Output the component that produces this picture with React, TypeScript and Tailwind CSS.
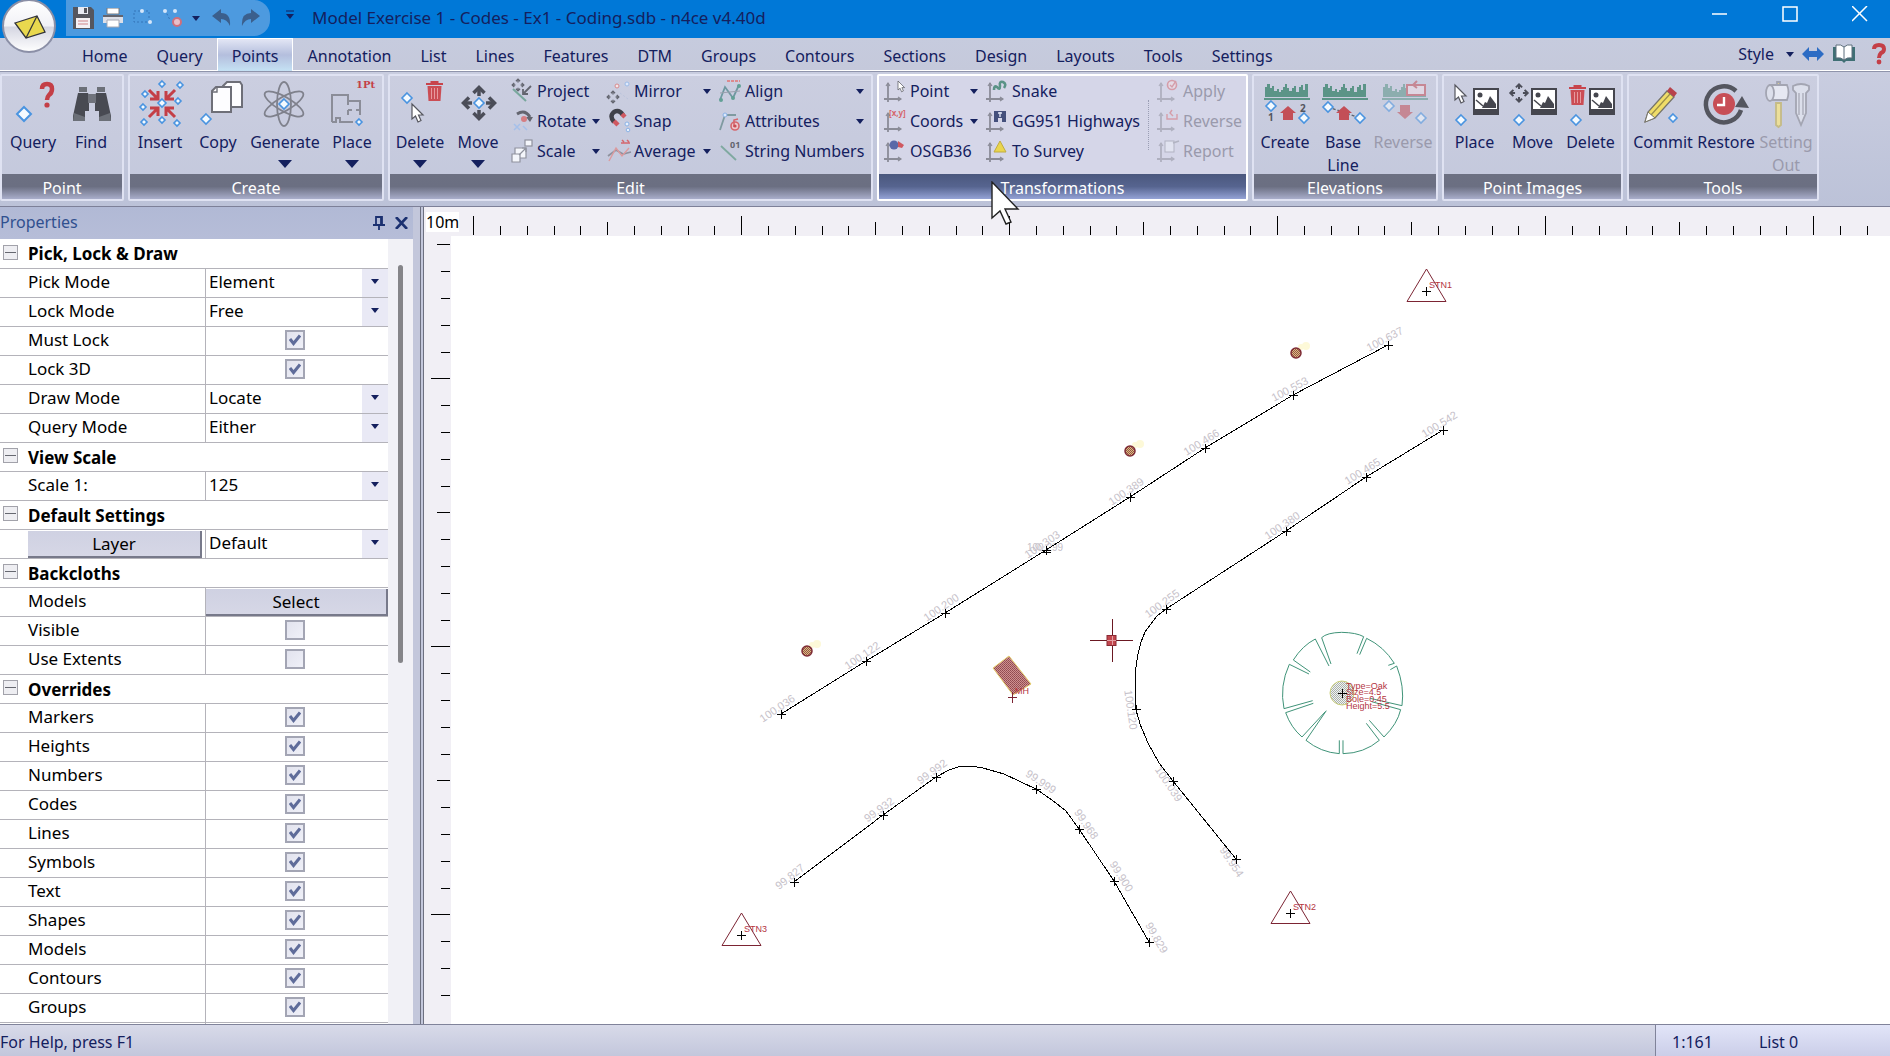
import React from "react";

const tabs = [
  "Home", "Query", "Points", "Annotation", "List", "Lines", "Features", "DTM",
  "Groups", "Contours", "Sections", "Design", "Layouts", "Tools", "Settings",
];

/* ---------- shared glyphs ---------- */

function Dia({ x, y, r = 4 }: { x: number; y: number; r?: number }) {
  return (
    <path
      d={`M${x} ${y - r}L${x + r} ${y}L${x} ${y + r}L${x - r} ${y}Z`}
      fill="#f4faff"
      stroke="#4a94e0"
      strokeWidth={r > 5 ? 2 : 1.6}
    />
  );
}

function Pointer({ x, y, s = 1 }: { x: number; y: number; s?: number }) {
  return (
    <path
      transform={`translate(${x} ${y}) scale(${s})`}
      d="M0 0V15L3.5 12L6 18L9 16.5L6.5 11H11Z"
      fill="#fff"
      stroke="#55565e"
      strokeWidth="1.2"
    />
  );
}

function Trash({ x, y }: { x: number; y: number }) {
  return (
    <g transform={`translate(${x} ${y})`}>
      <path d="M0 3H17M5.500 3V1H11.500V3" fill="none" stroke="#c8444c" strokeWidth="2" />
      <path d="M1.500 5H15.500L14.500 20H2.500Z" fill="#cb4d54" />
      <path d="M5.500 7V18M8.500 7V18M11.500 7V18" stroke="#e79a9e" strokeWidth="1" />
    </g>
  );
}

function FourWay({ x, y, r, c = "#4b4d58" }: { x: number; y: number; r: number; c?: string }) {
  return (
    <g transform={`translate(${x} ${y}) scale(${r / 16})`} fill="none" stroke={c} strokeWidth="3.500">
      <path d="M0 -15V-7M0 15V7M-15 0H-7M15 0H7" />
      <path d="M-5.500 -10L0 -15.500L5.500 -10M-5.500 10L0 15.500L5.500 10M-10 -5.500L-15.500 0L-10 5.500M10 -5.500L15.500 0L10 5.500" />
    </g>
  );
}

function Photo({ x, y }: { x: number; y: number }) {
  return (
    <g transform={`translate(${x} ${y})`}>
      <rect width="26" height="27" fill="#45464e" />
      <rect x="2" y="2" width="22" height="19" fill="#fff" />
      <circle cx="7" cy="7" r="2.500" fill="#45464e" />
      <path d="M9 20L12 14L14 15L17 8L23 16V20Z" fill="#45464e" />
      <path d="M3 12L10 18" stroke="#45464e" strokeWidth="1.500" />
    </g>
  );
}

function Bars({ x, y }: { x: number; y: number }) {
  return (
    <g transform={`translate(${x} ${y})`}>
      <path
        d="M0 14V4H2V1H5V5H7V3H9V8H12V6H14V9H16V7H18V4H20V1H22V5H24V8H27V5H29V3H31V9H34V4H36V2H38V7H40V1H43V14Z"
        fill="#5b9487"
      />
      <path d="M-1 16H45" stroke="#5b9487" strokeWidth="2" />
    </g>
  );
}

function House({ x, y, down }: { x: number; y: number; down?: boolean }) {
  return (
    <path
      transform={`translate(${x} ${y}) scale(1 ${down ? -1 : 1})`}
      d="M0 -7L8 0H5V7H-5V0H-8Z"
      fill="#c34f57"
    />
  );
}

function Axes() {
  return (
    <g fill="none" stroke="#8b8c98" strokeWidth="1.800">
      <path d="M4 4V23M0 20H17" />
      <path d="M2 7L4 4L6 7M14 18L17 20L14 22" strokeWidth="1.200" />
    </g>
  );
}

function Caret({ big }: { big?: boolean }) {
  return big ? (
    <svg width="14" height="8" viewBox="0 0 14 8"><path d="M0 0H14L7 8Z" fill="#14205e" /></svg>
  ) : (
    <svg width="8" height="5" viewBox="0 0 8 5" className="shrink-0"><path d="M0 0H8L4 5Z" fill="#14205e" /></svg>
  );
}

/* ---------- large ribbon icons, 48 x 48 ---------- */

const bigIcons: Record<string, React.ReactNode> = {
  query: (
    <>
      <Dia x={15} y={35} r={7} />
      <path d="M33 10Q33 5 38 5Q43 5 43 10Q43 14 40 16Q38 18 38 21" fill="none" stroke="#c43f47" strokeWidth="4.500" />
      <circle cx="38" cy="26" r="2.600" fill="#c43f47" />
    </>
  ),
  find: (
    <g fill="#484a52">
      <path d="M12 8H20V13H12ZM30 8H38V13H30Z" fill="#6c7078" />
      <path d="M11 14H21L22 17V32H18L18 42H6V37ZM29 14H39L44 37V42H32L32 32H28V17Z" />
      <rect x="21" y="15" width="8" height="9" fill="#70737c" />
      <path d="M7 34L6 42H18V38ZM43 34L44 42H32V38Z" fill="#6c7078" />
    </g>
  ),
  insert: (
    <>
      {[[26, 5], [44, 6], [9, 15], [42, 22], [7, 28], [8, 43], [26, 41], [41, 44]].map(([x, y]) => (
        <Dia key={`${x}-${y}`} x={x} y={y} r={3} />
      ))}
      <g fill="none" stroke="#c43f47" strokeWidth="3">
        <path d="M13 11L22 20M22 12V20H14M39 11L30 20M30 12V20H38M13 38L22 29M22 37V29H14M39 38L30 29M30 37V29H38" />
      </g>
      <Dia x={26} y={24} r={4} />
    </>
  ),
  copy: (
    <g fill="#fdfdff" stroke="#6e6f78" strokeWidth="2">
      <path d="M33 3H46L48 6V28H29V7Z" />
      <path d="M22 8H37V33H18V12Z" />
      <path d="M18 13H23V8" fill="none" strokeWidth="1.400" />
      <Dia x={12} y={40} r={5} />
    </g>
  ),
  generate: (
    <g fill="none" stroke="#7f818c" strokeWidth="1.800">
      <ellipse cx="23" cy="25" rx="7" ry="22" />
      <ellipse cx="23" cy="25" rx="7" ry="22" transform="rotate(60 23 25)" />
      <ellipse cx="23" cy="25" rx="7" ry="22" transform="rotate(-60 23 25)" />
      <Dia x={23} y={25} r={5} />
    </g>
  ),
  place: (
    <>
      <text x="28" y="9" fontSize="10" fontWeight="bold" fontFamily="DejaVu Serif, serif" fill="#c43f47">1Pt</text>
      <path d="M4 43V16H20V22H32V36M20 22V26M20 31H24M28 31H32M20 31V36M4 43H8V39H12V43H25" fill="none" stroke="#8b8d98" strokeWidth="2" />
      <Dia x={31} y={43} r={3} />
    </>
  ),
  delete: (
    <>
      <Dia x={11} y={19} r={5} />
      <Pointer x={16} y={25} />
      <Trash x={30} y={2} />
    </>
  ),
  move: (
    <>
      <FourWay x={25} y={24} r={16} />
      <Dia x={25} y={24} r={5} />
    </>
  ),
  elevCreate: (
    <>
      <Bars x={4} y={4} />
      <Dia x={10} y={27} r={5} />
      <Dia x={43} y={39} r={5} />
      <House x={27} y={34} />
      <text x="7" y="42" fontSize="10" fontWeight="bold" fill="#55565e">1</text>
      <text x="39" y="33" fontSize="10" fontWeight="bold" fill="#55565e">2</text>
    </>
  ),
  elevBase: (
    <>
      <Bars x={4} y={4} />
      <path d="M9 28L41 39" stroke="#5b6470" strokeWidth="1.500" strokeDasharray="3 2" />
      <Dia x={9} y={28} r={5} />
      <Dia x={41} y={39} r={5} />
      <House x={25} y={34} />
    </>
  ),
  elevReverse: (
    <g opacity="0.55">
      <Bars x={4} y={4} />
      <rect x="28" y="6" width="18" height="10" fill="#f1dfe6" stroke="#c34f57" strokeWidth="2" />
      <path d="M38 2L34 6L38 9" fill="none" stroke="#c34f57" strokeWidth="2" />
      <Dia x={10} y={27} r={5} />
      <Dia x={42} y={39} r={5} />
      <House x={26} y={33} down />
    </g>
  ),
  imgPlace: (
    <>
      <Pointer x={4} y={6} />
      <Photo x={22} y={9} />
      <Dia x={10} y={41} r={5} />
    </>
  ),
  imgMove: (
    <>
      <FourWay x={10} y={14} r={9} />
      <Photo x={22} y={9} />
      <Dia x={10} y={41} r={5} />
    </>
  ),
  imgDelete: (
    <>
      <Trash x={2} y={6} />
      <Photo x={22} y={9} />
      <Dia x={9} y={41} r={5} />
    </>
  ),
  commit: (
    <>
      <path d="M6 43L9 33L28 12L35 18L16 39Z" fill="#f0dd68" stroke="#77756a" strokeWidth="1.300" />
      <path d="M12 36L31 15" stroke="#9a8f4a" strokeWidth="1.200" />
      <path d="M6 43L9 33L16 39Z" fill="#fff" stroke="#77756a" />
      <path d="M28 12L31 8L38 14L35 18Z" fill="#b8434b" />
      <Dia x={34} y={39} r={4} />
    </>
  ),
  restore: (
    <>
      <path d="M34 12A18 18 0 1 0 39 31" fill="none" stroke="#54565f" strokeWidth="4.500" />
      <path d="M33 28L40 17L47 29Z" fill="#54565f" />
      <circle cx="22" cy="25" r="11" fill="#c74e56" />
      <path d="M22 18V26H15" fill="none" stroke="#fff" strokeWidth="2.400" />
    </>
  ),
  setting: (
    <g strokeWidth="1.800" stroke="#a3a5b2">
      <path d="M14 24H19V46L16.500 48L14 46Z" fill="#ecdf9a" stroke="#c5bb86" />
      <path d="M15 3H18V7H15Z" fill="#d8cd92" />
      <path d="M8 6H25Q28 13 25 21H8Z" fill="#e6e8f2" />
      <ellipse cx="8" cy="14" rx="4" ry="8" fill="#dcdfeb" />
      <path d="M31 7Q39 3 47 7V11L44 14V34L39 46L34 34V14L31 11Z" fill="#dcdfeb" />
      <path d="M37 14V36M41 14V36" strokeWidth="1.200" />
    </g>
  ),
};

/* ---------- small ribbon icons, 24 x 24 ---------- */

const smallIcons: Record<string, React.ReactNode> = {
  project: (
    <>
      <FourWay x={7} y={6} r={6} c="#63656f" />
      <path d="M2 10L15 22" stroke="#78a79c" strokeWidth="2" />
      <path d="M20 7L12 15M12 10V15H17" fill="none" stroke="#63656f" strokeWidth="1.800" />
    </>
  ),
  rotate: (
    <>
      <path d="M6 5Q14 0 19 8" fill="none" stroke="#63656f" strokeWidth="3" />
      <path d="M15 8H22L19 13Z" fill="#63656f" />
      <circle cx="13" cy="10" r="3" fill="#d57d82" />
      <path d="M3 15L9 21M3 21L9 15M12 17L16 21" stroke="#a5c0ea" strokeWidth="1.500" />
    </>
  ),
  scale: (
    <g fill="#f4f6fb" stroke="#8f929e" strokeWidth="1.200">
      <rect x="14" y="1" width="7" height="6" />
      <path d="M4 9H15V19H4Z" />
      <path d="M1 15H9V23H1Z" />
      <path d="M8 16L15 9M11 9H15V13" fill="none" />
    </g>
  ),
  mirror: (
    <>
      <FourWay x={5} y={18} r={6} c="#63656f" />
      <circle cx="9" cy="7" r="2" fill="#f3e7ea" stroke="#d78a8e" />
      <circle cx="19" cy="5" r="2" fill="#dfe9fb" stroke="#9bbbe8" />
      <path d="M12 14L20 20" stroke="#bac4dc" strokeDasharray="2 2" />
    </>
  ),
  snap: (
    <>
      <path d="M6 13Q1 7 6 3Q11 0 15 6" fill="none" stroke="#3f4149" strokeWidth="4.500" />
      <path d="M6 12L10 16M14 5L17 8" stroke="#cf5860" strokeWidth="4.500" />
      <circle cx="19" cy="15" r="2" fill="#e9f1fc" stroke="#8ab2e6" />
      <circle cx="20" cy="21" r="1.800" fill="#e9f1fc" stroke="#8ab2e6" />
    </>
  ),
  average: (
    <>
      <path d="M0 17L8 11L15 15L23 13" fill="none" stroke="#8f929e" strokeWidth="1.800" />
      <path d="M1 22L8 9L14 17L21 9" fill="none" stroke="#dc9a9e" strokeWidth="1.400" />
      <path d="M13 4H22M14 1L16 3M19 1L21 3" stroke="#d5666c" strokeWidth="1.500" />
    </>
  ),
  align: (
    <>
      <path d="M1 21L6 8L14 19L20 6" fill="none" stroke="#6e98a0" strokeWidth="1.800" />
      <path d="M1 14L21 12" stroke="#9ba0ae" />
      <path d="M8 2H21" stroke="#dc8a8e" strokeWidth="2" strokeDasharray="3 1" />
      <g fill="#63a096"><circle cx="2" cy="21" r="2" /><circle cx="14" cy="19" r="2" /><circle cx="20" cy="7" r="2" /></g>
    </>
  ),
  attributes: (
    <>
      <path d="M1 21L6 6H17" fill="none" stroke="#7f9aa0" strokeWidth="1.800" />
      <circle cx="6" cy="6" r="2" fill="#dce8fb" stroke="#8ab2e6" />
      <circle cx="16" cy="17" r="4" fill="#ecc7cc" stroke="#d5666c" strokeWidth="1.600" />
      <path d="M15 18V11L19 10" fill="none" stroke="#d5666c" strokeWidth="1.600" />
      <circle cx="16" cy="17" r="1.600" fill="#c94e56" />
    </>
  ),
  string: (
    <>
      <path d="M2 7L17 21" stroke="#7fa9a0" strokeWidth="1.800" />
      <text x="11" y="9" fontSize="9" fontWeight="bold" fill="#63656f">01</text>
    </>
  ),
  point: (
    <>
      <Axes />
      <Pointer x={14} y={2} s={0.6} />
    </>
  ),
  coords: (
    <>
      <Axes />
      <text x="5" y="7" fontSize="8" fontWeight="bold" fill="#d5666c">[x,y]</text>
    </>
  ),
  osgb: (
    <>
      <Axes />
      <circle cx="10" cy="6" r="4.500" fill="#5a69a8" />
      <path d="M14 2L20 6L18 9L14 8Z" fill="#cf5860" />
    </>
  ),
  snake: (
    <>
      <Axes />
      <path d="M8 11Q8 6 11 8Q14 12 14 7Q13 2 17 3Q21 5 18 9" fill="none" stroke="#5b9487" strokeWidth="2.600" />
    </>
  ),
  highways: (
    <>
      <Axes />
      <path d="M8 2H20V13H16V9H12V13H8Z" fill="#44507c" />
      <path d="M12 4H16M14 3V8" stroke="#dfe4f4" strokeWidth="1.400" />
    </>
  ),
  survey: (
    <>
      <Axes />
      <path d="M14 2L20 13H8Z" fill="#ead54e" stroke="#c0ac3f" />
    </>
  ),
  apply: (
    <g opacity="0.5">
      <Axes />
      <circle cx="15" cy="6" r="4.500" fill="#f3dfe4" stroke="#d5666c" strokeWidth="1.600" />
      <path d="M13 6L15 8L19 2" fill="none" stroke="#d5666c" strokeWidth="1.400" />
    </g>
  ),
  reverse: (
    <g opacity="0.5">
      <Axes />
      <path d="M10 5V10H20V5M15 1L13 4L16 7" fill="none" stroke="#d5666c" strokeWidth="1.400" />
    </g>
  ),
  report: (
    <g opacity="0.5">
      <Axes />
      <rect x="8" y="2" width="9" height="11" fill="#eef0f8" stroke="#8f929e" />
      <path d="M16 4L22 2" stroke="#8f929e" strokeWidth="1.500" />
    </g>
  ),
};

/* ---------- ribbon ---------- */

function BigButton({ icon, label, width, menu, disabled }: {
  icon: string; label: string; width: string; menu?: boolean; disabled?: boolean;
}) {
  return (
    <button
      disabled={disabled}
      className={`${width} ${disabled ? "text-[#9a9aac]" : "text-[#14205e]"} flex flex-col items-center pt-[3px] h-[99px]`}
    >
      <svg width="48" height="48" viewBox="0 0 48 48" className="shrink-0 mb-1 overflow-visible">
        {bigIcons[icon]}
      </svg>
      <span className={`${label.includes(" ") ? "" : "whitespace-nowrap"} leading-[23px]`}>{label}</span>
      {menu && <span className="mt-[6px]"><Caret big /></span>}
    </button>
  );
}

type SmallItem = { icon: string; label: string; menu?: boolean; disabled?: boolean };

function SmallColumn({ items, width }: { items: SmallItem[]; width: string }) {
  return (
    <div className={`${width} flex flex-col`}>
      {items.map((it) => (
        <button
          key={it.label}
          disabled={it.disabled}
          className={`${it.disabled ? "text-[#9a9aac]" : "text-[#14205e]"} h-[30px] flex items-center`}
        >
          <svg width="24" height="24" viewBox="0 0 24 24" className="shrink-0 mr-[2px] overflow-visible">
            {smallIcons[it.icon]}
          </svg>
          <span className="flex-1 text-left whitespace-nowrap">{it.label}</span>
          {it.menu && <Caret />}
        </button>
      ))}
    </div>
  );
}

function Panel({ title, width, active, children }: {
  title: string; width: string; active?: boolean; children: React.ReactNode;
}) {
  return (
    <section
      className={`${width} ${active ? "bg-[#d5d6e8] border-white" : "bg-linear-to-b from-[#cbcee0] to-[#c3c8dc] border-[#dfe2f2]"} shrink-0 h-[127px] border-2 rounded-xs flex flex-col`}
    >
      <div className="flex h-[98px] justify-center">{children}</div>
      <h2
        className={`${active ? "from-[#4b587e] via-[#56648f] to-[#95a3d6]" : "from-[#6c7082] via-[#6b6f82] to-[#a9aecb]"} bg-linear-to-b h-[25px] leading-[28px] text-center text-white`}
      >
        {title}
      </h2>
    </section>
  );
}

function Ribbon() {
  return (
    <div className="h-[135px] shrink-0 flex gap-1 pt-[2px] bg-linear-to-b from-[#c9cde0] to-[#bcc2d8] border-t border-[#8f94ab] overflow-hidden">
      <Panel title="Point" width="w-[124px]">
        <BigButton icon="query" label="Query" width="w-[58px]" />
        <BigButton icon="find" label="Find" width="w-[58px]" />
      </Panel>
      <Panel title="Create" width="w-[256px]">
        <BigButton icon="insert" label="Insert" width="w-[58px]" />
        <BigButton icon="copy" label="Copy" width="w-[58px]" />
        <BigButton icon="generate" label="Generate" width="w-[76px]" menu />
        <BigButton icon="place" label="Place" width="w-[58px]" menu />
      </Panel>
      <Panel title="Edit" width="w-[485px]">
        <BigButton icon="delete" label="Delete" width="w-[58px]" menu />
        <BigButton icon="move" label="Move" width="w-[58px]" menu />
        <div className="flex gap-2 pl-1 pr-[6px]">
          <SmallColumn
            width="w-[89px]"
            items={[
              { icon: "project", label: "Project" },
              { icon: "rotate", label: "Rotate", menu: true },
              { icon: "scale", label: "Scale", menu: true },
            ]}
          />
          <SmallColumn
            width="w-[103px]"
            items={[
              { icon: "mirror", label: "Mirror", menu: true },
              { icon: "snap", label: "Snap" },
              { icon: "average", label: "Average", menu: true },
            ]}
          />
          <SmallColumn
            width="w-[145px]"
            items={[
              { icon: "align", label: "Align", menu: true },
              { icon: "attributes", label: "Attributes", menu: true },
              { icon: "string", label: "String Numbers" },
            ]}
          />
        </div>
      </Panel>
      <Panel title="Transformations" width="w-[371px]" active>
        <div className="flex gap-2">
          <SmallColumn
            width="w-[94px]"
            items={[
              { icon: "point", label: "Point", menu: true },
              { icon: "coords", label: "Coords", menu: true },
              { icon: "osgb", label: "OSGB36" },
            ]}
          />
          <SmallColumn
            width="w-[154px]"
            items={[
              { icon: "snake", label: "Snake" },
              { icon: "highways", label: "GG951 Highways" },
              { icon: "survey", label: "To Survey" },
            ]}
          />
          <div className="my-6 border-l border-dotted border-[#9a9eb4]" />
          <SmallColumn
            width="w-[84px]"
            items={[
              { icon: "apply", label: "Apply", disabled: true },
              { icon: "reverse", label: "Reverse", disabled: true },
              { icon: "report", label: "Report", disabled: true },
            ]}
          />
        </div>
      </Panel>
      <Panel title="Elevations" width="w-[186px]">
        <BigButton icon="elevCreate" label="Create" width="w-[58px]" />
        <BigButton icon="elevBase" label="Base Line" width="w-[58px]" />
        <BigButton icon="elevReverse" label="Reverse" width="w-[62px]" disabled />
      </Panel>
      <Panel title="Point Images" width="w-[181px]">
        <BigButton icon="imgPlace" label="Place" width="w-[58px]" />
        <BigButton icon="imgMove" label="Move" width="w-[58px]" />
        <BigButton icon="imgDelete" label="Delete" width="w-[58px]" />
      </Panel>
      <Panel title="Tools" width="w-[192px]">
        <BigButton icon="commit" label="Commit" width="w-[64px]" />
        <BigButton icon="restore" label="Restore" width="w-[62px]" />
        <BigButton icon="setting" label="Setting Out" width="w-[58px]" disabled />
      </Panel>
    </div>
  );
}

/* ---------- title bar and tabs ---------- */

function TitleBar() {
  return (
    <header className="h-[38px] shrink-0 flex items-center bg-[#0078d7]">
      <div className="ml-[66px] w-[204px] h-9 -mt-[2px] rounded-r-2xl bg-[#4d9adf] flex items-center gap-2 pl-[6px]">
        <button aria-label="Save">
          <svg width="22" height="22" viewBox="0 0 22 22">
            <path d="M1 0H19L22 3V22H1Z" fill="#55565e" />
            <rect x="6" y="0" width="10" height="7" fill="#e8eaf2" /><rect x="12" y="1" width="3" height="5" fill="#55565e" />
            <rect x="4" y="11" width="14" height="10" fill="#f4f1f4" />
            <path d="M6 14H16M6 17H16" stroke="#cf8589" />
          </svg>
        </button>
        <button aria-label="Print">
          <svg width="22" height="20" viewBox="0 0 22 20">
            <path d="M5 0H17V6H5Z" fill="#fff" stroke="#77787f" />
            <path d="M1 7H21V15H1Z" fill="#dcdfe8" />
            <path d="M1 7H21V9H1Z" fill="#63656f" />
            <path d="M5 12H17V19H5Z" fill="#fff" stroke="#a5a8b4" />
          </svg>
        </button>
        <button aria-label="Select">
          <svg width="22" height="20" viewBox="0 0 22 20">
            <rect x="2" y="3" width="15" height="11" fill="none" stroke="#3474b8" strokeDasharray="2 2" />
            <circle cx="10" cy="3" r="2" fill="#d5e6fa" /><circle cx="18" cy="14" r="2" fill="#d5e6fa" />
          </svg>
        </button>
        <button aria-label="Deselect">
          <svg width="22" height="20" viewBox="0 0 22 20">
            <path d="M3 2L8 12" stroke="#3474b8" strokeDasharray="2 2" />
            <circle cx="3" cy="3" r="2" fill="#d5e6fa" /><circle cx="13" cy="3" r="2" fill="#d5e6fa" />
            <circle cx="15" cy="14" r="4" fill="#e8bfc9" stroke="#cf6f7c" strokeWidth="2" />
          </svg>
        </button>
        <Caret />
        <button aria-label="Undo" className="ml-1">
          <svg width="20" height="18" viewBox="0 0 20 18">
            <path d="M0 7L9 0V4Q19 4 18 17Q15 10 9 10V14Z" fill="#3b5f8c" />
          </svg>
        </button>
        <button aria-label="Redo">
          <svg width="20" height="18" viewBox="0 0 20 18">
            <path d="M20 7L11 0V4Q1 4 2 17Q5 10 11 10V14Z" fill="#3b5f8c" />
          </svg>
        </button>
      </div>
      <button aria-label="Customize toolbar" className="ml-4 mb-2">
        <svg width="8" height="10" viewBox="0 0 8 10"><path d="M0 1H8" stroke="#14205e" /><path d="M0 4H8L4 9Z" fill="#14205e" /></svg>
      </button>
      <h1 className="ml-[18px] mb-[3px] flex-1 text-[#14205e] text-[17px]">
        Model Exercise 1 - Codes - Ex1 - Coding.sdb - n4ce v4.40d
      </h1>
      <div className="flex gap-[54px] pr-[22px] mb-[10px]">
        {["M0 8H15", "M1 1H15V15H1Z", "M0 0L15 15M15 0L0 15"].map((d, i) => (
          <button key={d} aria-label={["Minimize", "Maximize", "Close"][i]}>
            <svg width="16" height="16" viewBox="0 0 16 16"><path d={d} fill="none" stroke="#fff" strokeWidth="1.500" /></svg>
          </button>
        ))}
      </div>
    </header>
  );
}

function TabBar() {
  return (
    <nav className="h-[33px] shrink-0 flex bg-linear-to-b from-[#c6cbde] to-[#c5c9db] pl-[67px] border-b border-white">
      {tabs.map((t) => (
        <button
          key={t}
          className={`pl-[14px] pr-[13px] border text-[#14205e] leading-[34px] ${
            t === "Points"
              ? "border-white border-b-0 bg-linear-to-b from-[#e3e6f5] via-[#b4bedd] to-[#c5e2f4] -mb-px"
              : "border-transparent"
          }`}
        >
          {t}
        </button>
      ))}
      <div className="ml-auto flex items-center gap-3 pr-1">
        <button className="flex items-center gap-3 text-[#14205e] leading-[28px]">
          Style <Caret />
        </button>
        <button aria-label="Toggle width" className="-mx-1">
          <svg width="22" height="14" viewBox="0 0 22 14"><path d="M0 7L7 0V4H15V0L22 7L15 14V10H7V14Z" fill="#2c6cc4" /></svg>
        </button>
        <button aria-label="Manual">
          <svg width="24" height="20" viewBox="0 0 24 20">
            <path d="M1 3H23V17H14L12 19L10 17H1Z" fill="#3f6f74" />
            <path d="M4 1Q9 0 12 3Q15 0 20 1V14Q15 13 12 16Q9 13 4 14Z" fill="#fff" stroke="#5d6f7c" />
            <path d="M12 3V16" stroke="#5d6f7c" />
          </svg>
        </button>
        <button aria-label="Help" className="ml-1">
          <svg width="14" height="22" viewBox="0 0 14 22">
            <path d="M2 6Q2 2 7 2Q12 2 12 6Q12 9 9 10Q7 12 7 15" fill="none" stroke="#c43f47" strokeWidth="4" />
            <circle cx="7" cy="19" r="2.400" fill="#c43f47" />
          </svg>
        </button>
      </div>
    </nav>
  );
}

/* ---------- properties ---------- */

type Prop = { name: string; kind: "select" | "check" | "button" | "layer"; value?: string; on?: boolean };

const groups: { title: string; rows: Prop[] }[] = [
  {
    title: "Pick, Lock & Draw",
    rows: [
      { name: "Pick Mode", kind: "select", value: "Element" },
      { name: "Lock Mode", kind: "select", value: "Free" },
      { name: "Must Lock", kind: "check", on: true },
      { name: "Lock 3D", kind: "check", on: true },
      { name: "Draw Mode", kind: "select", value: "Locate" },
      { name: "Query Mode", kind: "select", value: "Either" },
    ],
  },
  { title: "View Scale", rows: [{ name: "Scale 1:", kind: "select", value: "125" }] },
  { title: "Default Settings", rows: [{ name: "Layer", kind: "layer", value: "Default" }] },
  {
    title: "Backcloths",
    rows: [
      { name: "Models", kind: "button", value: "Select" },
      { name: "Visible", kind: "check" },
      { name: "Use Extents", kind: "check" },
    ],
  },
  {
    title: "Overrides",
    rows: [
      "Markers", "Heights", "Numbers", "Codes", "Lines", "Symbols",
      "Text", "Shapes", "Models", "Contours", "Groups",
    ].map((name) => ({ name, kind: "check" as const, on: true })),
  },
];

const raised =
  "bg-linear-to-b from-[#cfd1e2] to-[#d6d7e6] border-r-2 border-b-2 border-[#77798a] text-center block w-full h-[27px] leading-[26px]";

function PropRow({ row, id }: { row: Prop; id: string }) {
  return (
    <tr className="h-[29px]">
      <th scope="row" className="border-t border-r border-[#b4b3ba] pl-7 font-normal text-left">
        {row.kind === "layer" ? (
          <div className="pr-[3px]"><button className={raised}>{row.name}</button></div>
        ) : (
          <label htmlFor={id} className="block leading-[26px] pb-[2px]">{row.name}</label>
        )}
      </th>
      <td className="border-t border-[#b4b3ba]">
        {(row.kind === "select" || row.kind === "layer") && (
          <div className="grid items-center">
            <select
              id={id}
              aria-label={row.name}
              defaultValue={row.value}
              className="col-start-1 row-start-1 appearance-none bg-transparent w-full h-[28px] pl-[3px] pb-[2px] leading-[26px]"
            >
              <option>{row.value}</option>
            </select>
            <span className="col-start-1 row-start-1 justify-self-end w-[26px] h-[28px] bg-[#e9e9f5] flex items-center justify-center pb-1 pointer-events-none">
              <Caret />
            </span>
          </div>
        )}
        {row.kind === "check" && (
          <div className="grid place-items-center pr-1 pb-[2px]">
            <input
              id={id}
              type="checkbox"
              defaultChecked={row.on}
              className="peer col-start-1 row-start-1 appearance-none size-5 border-2 border-[#a3a5b4] bg-linear-to-br from-[#e2e3ee] to-[#eff0f8]"
            />
            <svg width="12" height="12" viewBox="0 0 12 12" className="col-start-1 row-start-1 invisible peer-checked:visible pointer-events-none">
              <path d="M1 5L4.500 9.500L11 1.500" fill="none" stroke="#5f6c9a" strokeWidth="3" />
            </svg>
          </div>
        )}
        {row.kind === "button" && <button id={id} className={raised}>{row.value}</button>}
      </td>
    </tr>
  );
}

function Properties() {
  return (
    <aside className="w-[413px] shrink-0 flex flex-col bg-white text-[17px] text-black">
      <div className="h-8 shrink-0 flex items-center bg-linear-to-b from-[#b1b9d5] to-[#b6bdd8] pr-[5px]">
        <h2 className="flex-1 text-[#30508f] text-base leading-[30px] pb-[2px]">Properties</h2>
        <button aria-label="Auto hide" className="mr-[10px]">
          <svg width="12" height="14" viewBox="0 0 12 14"><path d="M3 1H9V9H3ZM0 9H12M6 9V14M8 1V9" fill="none" stroke="#1b3070" strokeWidth="1.800" /></svg>
        </button>
        <button aria-label="Close panel">
          <svg width="13" height="12" viewBox="0 0 13 12"><path d="M1 0L12 12M12 0L1 12" stroke="#1b3070" strokeWidth="2.600" /></svg>
        </button>
      </div>
      <div className="flex-1 min-h-0 flex overflow-hidden">
        <div className="flex-1 overflow-hidden">
          <table className="w-full table-fixed border-separate border-spacing-0">
            <colgroup>
              <col className="w-[206px]" />
              <col />
            </colgroup>
            {groups.map((g, gi) => (
              <tbody key={g.title}>
                <tr className="h-[29px]">
                  <th colSpan={2} scope="rowgroup" className={`${gi ? "border-t border-[#b4b3ba]" : ""} text-left font-bold pl-[3px]`}>
                    <span className="flex items-center gap-[10px] leading-[27px]">
                      <button aria-label={`Collapse ${g.title}`} className="mb-[3px]">
                        <svg width="15" height="15" viewBox="0 0 15 15" className="block">
                          <rect x="0.500" y="0.500" width="14" height="14" fill="#eeeef2" stroke="#a2a2aa" />
                          <path d="M2 7.500H13" stroke="#666870" />
                        </svg>
                      </button>
                      {g.title}
                    </span>
                  </th>
                </tr>
                {g.rows.map((r) => (
                  <PropRow key={r.name} row={r} id={`${gi}-${r.name}`} />
                ))}
              </tbody>
            ))}
            <tbody>
              <tr className="h-1">
                <td className="border-t border-r border-[#b4b3ba]" />
                <td className="border-t border-[#b4b3ba]" />
              </tr>
            </tbody>
          </table>
        </div>
        {/* scrollbar */}
        <div className="w-[25px] bg-[#f1f1f6] pt-[26px] flex justify-center">
          <div className="w-[5px] h-[398px] rounded-full bg-[#858589]" />
        </div>
      </div>
    </aside>
  );
}

/* ---------- survey drawing ---------- */

type Mark = [number, number, string, number, boolean?];

// x, y, height, label angle, label under the line
const marks: Mark[] = [
  [781, 714, "100.036", -34], [866, 661, "100.122", -34], [945, 613, "100.200", -34],
  [1046, 550, "100.303", -34], [1130, 497, "100.389", -34], [1205, 448, "100.466", -32],
  [1293, 395, "100.553", -28], [1388, 345, "100.637", -28],
  [1443, 430, "100.542", -32], [1366, 477, "100.465", -32], [1286, 531, "100.380", -34],
  [1166, 609, "100.255", -36], [1136, 709, "100.120", 82, true], [1173, 781, "100.039", 56, true],
  [1236, 859, "99.954", 56, true],
  [794, 882, "99.827", -38], [883, 815, "99.932", -36], [936, 777, "99.992", -36],
  [1036, 789, "99.999", 34], [1079, 829, "99.968", 56], [1114, 881, "99.900", 58],
  [1149, 942, "99.829", 60],
];

const stations: [number, number, string][] = [
  [1426, 291, "STN1"], [1290, 913, "STN2"], [741, 935, "STN3"],
];

const posts: [number, number][] = [[1296, 353], [1130, 451], [807, 651]];

const hTicks = Array.from({ length: 80 }, (_, i) => i);
const vTicks = Array.from({ length: 29 }, (_, i) => i);

function Drawing() {
  return (
    <svg className="absolute inset-0 w-full h-full" fontFamily="Liberation Sans, Arial, sans-serif">
      <defs>
        <pattern id="hatch" width="2" height="2" patternUnits="userSpaceOnUse">
          <rect width="2" height="2" fill="#d08f8f" />
          <rect width="1" height="1" fill="#8f4a50" />
          <rect x="1" y="1" width="1" height="1" fill="#98565a" />
        </pattern>
        <pattern id="stipple" width="2" height="2" patternUnits="userSpaceOnUse">
          <rect width="2" height="2" fill="#dcc07c" />
          <rect width="1" height="1" fill="#94504a" />
          <rect x="1" y="1" width="1" height="1" fill="#94504a" />
        </pattern>
        <pattern id="bark" width="2" height="2" patternUnits="userSpaceOnUse">
          <rect width="2" height="2" fill="#f2f2f2" />
          <rect width="1" height="1" fill="#a9b2ac" />
          <rect x="1" y="1" width="1" height="1" fill="#a9b2ac" />
        </pattern>
      </defs>
      <g transform="translate(-424 -207)">
        {/* rulers */}
        <g stroke="#000" strokeWidth="1" shapeRendering="crispEdges">
          {hTicks.map((i) => {
            const x = Math.round(473.2 + i * 26.8) + 0.5;
            return <path key={i} d={`M${x} ${i % 10 === 0 ? 216 : i % 5 === 0 ? 222 : 226}V235`} />;
          })}
          {vTicks.map((i) => {
            const y = Math.round(244.4 + i * 26.8) + 0.5;
            return <path key={i} d={`M${i % 10 === 5 ? 431 : i % 5 === 0 ? 437 : 441} ${y}H450`} />;
          })}
        </g>

        {/* posts */}
        {posts.map(([x, y]) => (
          <g key={x}>
            <circle cx={x + 10} cy={y - 7} r="4" fill="#fdf9d8" />
            <circle cx={x + 5} cy={y - 6} r="3" fill="#fdf9d8" />
            <circle cx={x} cy={y} r="5" fill="url(#stipple)" stroke="#7d2a34" strokeWidth="1.500" />
          </g>
        ))}

        {/* heights */}
        <g fontSize="11" fill="#c6c1c9" textAnchor="middle">
          {marks.map(([x, y, t, a, under]) => (
            <text key={`${x}-${y}`} transform={`translate(${x} ${y}) rotate(${a})`} y={under ? 9 : a > 0 ? -5 : -3}>{t}</text>
          ))}
          <text transform="translate(1045 551)" fontSize="10">100.299</text>
        </g>

        {/* kerb lines */}
        <g fill="none" stroke="#000" shapeRendering="crispEdges">
          <path d="M781 714L866 661L945 613L1046 550L1130 497L1205 448L1293 395L1388 345" />
          <path d="M1443 430L1366 477L1286 531L1166 609L1157 616L1150 625L1145 632L1141 642L1138 654L1136 667L1135 683L1136 709L1140 724L1148 743L1159 763L1173 781L1236 859" />
          <path d="M794 882L883 815L936 777L949 770L961 766L971 766L983 768L1004 774L1036 789L1052 800L1066 811L1079 829L1114 881L1149 942" />
          {marks.map(([x, y]) => (
            <path key={`${x}-${y}`} d={`M${x - 4} ${y + 0.5}H${x + 5}M${x + 0.5} ${y - 4}V${y + 5}`} />
          ))}
          <path d="M1042 552.500H1051" />
        </g>

        {/* stations */}
        {stations.map(([x, y, t]) => (
          <g key={t}>
            <path d={`M${x + 0.5} ${y - 22}L${x + 20} ${y + 10.5}H${x - 19}Z`} fill="none" stroke="#7c2433" />
            <path d={`M${x - 4} ${y + 0.5}H${x + 5}M${x + 0.5} ${y - 4}V${y + 5}`} stroke="#000" />
            <text x={x + 3} y={y - 3} fontSize="9" fill="#b4343f">{t}</text>
          </g>
        ))}

        {/* picked point */}
        <path d="M1090 640.500H1133M1112.500 619V662" stroke="#6b1822" />
        <rect x="1107" y="635.500" width="9" height="10" fill="#c2474e" stroke="#8a2a34" />
        <path d="M1107 640.500H1116M1112.500 636V645" stroke="#e6a2a6" />

        {/* manhole */}
        <path d="M1009 656L1031 684L1013 695L993 668Z" fill="url(#hatch)" stroke="#e6cf6e" />
        <text x="1015" y="694" fontSize="9" fill="#b4343f">MH</text>
        <path d="M1008 697.500H1017M1012.500 692V703" stroke="#7c2433" />

        {/* tree */}
        <g transform="translate(1260 610) scale(0.3333)" fill="none" stroke="#3f9377" strokeWidth="3">
          <path d="M213 162L185 83Q200 68 245 67Q290 68 311 80L291 131" />
          <path d="M299 134L320 85Q372 110 403 160L385 166" />
          <path d="M391 179L410 168Q434 230 426 287L330 265" />
          <path d="M335 275L422 299Q412 342 372 381L328 331" />
          <path d="M319 340L358 391Q312 430 249 431V391" />
          <path d="M238 391V431Q182 427 138 391L199 302" />
          <path d="M196 305L126 381Q93 353 77 308L160 280" />
          <path d="M158 272L72 296Q58 228 88 163L147 192" />
          <path d="M151 186L100 150Q127 107 166 87L207 168" />
        </g>
        <circle cx="1342" cy="693" r="12" fill="url(#bark)" stroke="#cbd07c" />
        <g fontSize="9" fill="#b4343f">
          <text x="1346" y="689">Type=Oak</text>
          <text x="1346" y="695">Size=4.5</text>
          <text x="1346" y="702">Bole=0.45</text>
          <text x="1346" y="709">Height=5.5</text>
        </g>
        <path d="M1338 693.500H1347M1342.500 689V698" stroke="#000" />
      </g>
    </svg>
  );
}

function Viewport() {
  return (
    <main className="relative flex-1 min-w-0 bg-[#f1eff5] pl-[27px] pt-[29px]">
      <div className="h-full bg-white" />
      <Drawing />
      <span className="absolute left-[2px] top-[5px] w-[33px] h-5 leading-5 text-center bg-white text-black text-base">10m</span>
    </main>
  );
}

function StatusBar() {
  return (
    <footer className="h-8 shrink-0 flex border-t border-[#80839a] bg-linear-to-b from-[#d8dae9] to-[#c3c7dc] text-[#14205e] text-base leading-[34px]">
      <p className="flex-1">For Help, press F1</p>
      <div className="w-[235px] border-l border-[#80839a] bg-linear-to-b from-[#e2e5f8] to-[#cbcee9] pl-4 flex gap-[46px]">
        <span>1:161</span>
        <span>List 0</span>
      </div>
    </footer>
  );
}

function App() {
  return (
    <div className="relative h-screen flex flex-col overflow-hidden bg-[#c5c9db] font-['Noto_Sans',sans-serif] text-base">
      <TitleBar />
      <TabBar />
      <Ribbon />
      <div className="flex-1 min-h-0 flex border-t border-[#7d8098]">
        <Properties />
        <div className="w-[11px] shrink-0 bg-[#c3c7db] border-r-4 border-double border-[#6d7080]" />
        <Viewport />
      </div>
      <StatusBar />

      {/* application button */}
      <button aria-label="Application menu" className="absolute left-[2px] -top-[2px]">
        <svg width="56" height="56" viewBox="0 0 56 56">
          <defs>
            <linearGradient id="orb" x1="0" y1="0" x2="0" y2="1">
              <stop offset="0" stopColor="#ffffff" />
              <stop offset="0.500" stopColor="#f1f1f6" />
              <stop offset="0.520" stopColor="#d5d6e2" />
              <stop offset="1" stopColor="#ffffff" />
            </linearGradient>
          </defs>
          <circle cx="27" cy="28" r="26" fill="url(#orb)" stroke="#8b8fa6" strokeWidth="2" />
          <path d="M13 25L35 18L43 34L24 40Z" fill="#e9d84e" stroke="#33343a" strokeWidth="1.300" />
          <path d="M35 18L24 40" stroke="#33343a" strokeWidth="1.300" />
        </svg>
      </button>

      {/* mouse pointer */}
      <svg width="30" height="46" viewBox="0 0 30 46" className="absolute left-[991px] top-[181px] pointer-events-none">
        <path d="M1 1V37L9 30L15 43L20 41L14 28H27Z" fill="#fff" stroke="#222" strokeWidth="1.400" />
      </svg>
    </div>
  );
}

export default App;
